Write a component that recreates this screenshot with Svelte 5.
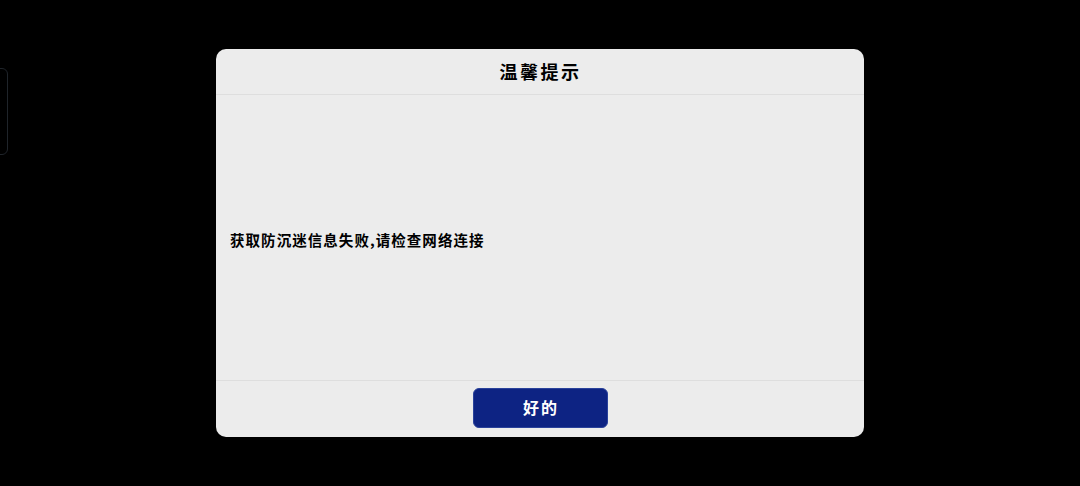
<script lang="ts">
  let title = '温馨提示';
  let message = '获取防沉迷信息失败,请检查网络连接';
  let confirmLabel = '好的';
</script>

<div class="screen">
  <div class="side-tab"></div>

  <div class="dialog">
    <header class="dialog-title">{title}</header>
    <div class="dialog-body">{message}</div>
    <footer class="dialog-footer">
      <button class="ok-btn">{confirmLabel}</button>
    </footer>
  </div>
</div>

<style>
  :global(body) {
    margin: 0;
    background: #000;
  }

  .screen {
    position: relative;
    width: 1080px;
    height: 486px;
    background: #000;
    overflow: hidden;
    display: flex;
    justify-content: center;
    padding-top: 49px;
    box-sizing: border-box;
    font-family: "Noto Sans CJK SC", "Noto Sans", sans-serif;
  }

  /* edge of a floating panel, mostly off screen */
  .side-tab {
    position: absolute;
    left: -20px;
    top: 68px;
    width: 26px;
    height: 85px;
    border: 1px solid #1f242a;
    border-radius: 6px;
  }

  .dialog {
    width: 648px;
    height: 388px;
    background: #ececec;
    border-radius: 10px;
    display: flex;
    flex-direction: column;
  }

  .dialog-title {
    height: 46px;
    flex-shrink: 0;
    box-sizing: border-box;
    padding: 0 0 2px 1px;
    display: flex;
    align-items: center;
    justify-content: center;
    border-bottom: 1px solid #dedede;
    font-size: 18px;
    font-weight: 700;
    letter-spacing: 2.5px;
    color: #000;
  }

  .dialog-body {
    flex: 1;
    display: flex;
    align-items: center;
    padding: 3px 14px 0;
    font-size: 14.5px;
    font-weight: 700;
    letter-spacing: 1.05px;
    color: #000;
  }

  .dialog-footer {
    height: 57px;
    flex-shrink: 0;
    box-sizing: border-box;
    border-top: 1px solid #dedede;
    padding-top: 7px;
    display: flex;
    justify-content: center;
    align-items: flex-start;
  }

  .ok-btn {
    width: 135px;
    height: 40px;
    box-sizing: border-box;
    border: 1px solid #2a429b;
    border-radius: 6px;
    padding: 0 0 3px 2px;
    background: #0d2383;
    color: #fff;
    font-family: inherit;
    font-size: 16px;
    font-weight: 700;
    letter-spacing: 2px;
  }
</style>
